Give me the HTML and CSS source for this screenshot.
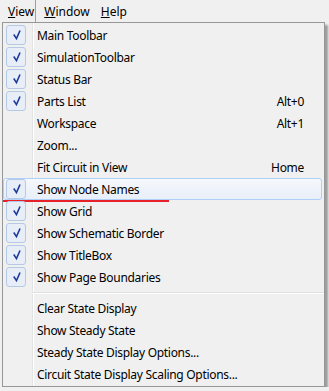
FILE: index.html
```html
<!DOCTYPE html>
<html lang="en">
<head>
    <meta charset="UTF-8">
    <meta name="viewport" content="width=device-width, initial-scale=1.0">
    <title>View Menu</title>
    <link rel="stylesheet" href="styles.css">
</head>
<body>
    <div class="menubar">
        <span class="bar-item active"><u>V</u>iew</span>
        <span class="bar-item window"><u>W</u>indow</span>
        <span class="bar-item help"><u>H</u>elp</span>
    </div>
    <div class="menu">
        <div class="item"><span class="check on"><svg viewBox="0 0 20 20"><polyline points="7.5,9.5 10.5,14 14.5,5"/></svg></span><span class="label">Main Toolbar</span></div>
        <div class="item"><span class="check on"><svg viewBox="0 0 20 20"><polyline points="7.5,9.5 10.5,14 14.5,5"/></svg></span><span class="label">SimulationToolbar</span></div>
        <div class="item"><span class="check on"><svg viewBox="0 0 20 20"><polyline points="7.5,9.5 10.5,14 14.5,5"/></svg></span><span class="label">Status Bar</span></div>
        <div class="item"><span class="check on"><svg viewBox="0 0 20 20"><polyline points="7.5,9.5 10.5,14 14.5,5"/></svg></span><span class="label">Parts List</span><span class="key">Alt+0</span></div>
        <div class="item"><span class="check"></span><span class="label">Workspace</span><span class="key">Alt+1</span></div>
        <div class="item"><span class="check"></span><span class="label">Zoom...</span></div>
        <div class="item"><span class="check"></span><span class="label">Fit Circuit in View</span><span class="key">Home</span></div>
        <div class="item hover"><span class="check on"><svg viewBox="0 0 20 20"><polyline points="7.5,9.5 10.5,14 14.5,5"/></svg></span><span class="label">Show Node Names</span><span class="mark"></span></div>
        <div class="item"><span class="check on"><svg viewBox="0 0 20 20"><polyline points="7.5,9.5 10.5,14 14.5,5"/></svg></span><span class="label">Show Grid</span></div>
        <div class="item"><span class="check on"><svg viewBox="0 0 20 20"><polyline points="7.5,9.5 10.5,14 14.5,5"/></svg></span><span class="label">Show Schematic Border</span></div>
        <div class="item"><span class="check on"><svg viewBox="0 0 20 20"><polyline points="7.5,9.5 10.5,14 14.5,5"/></svg></span><span class="label">Show TitleBox</span></div>
        <div class="item"><span class="check on"><svg viewBox="0 0 20 20"><polyline points="7.5,9.5 10.5,14 14.5,5"/></svg></span><span class="label">Show Page Boundaries</span></div>
        <div class="sep"></div>
        <div class="item"><span class="check"></span><span class="label">Clear State Display</span></div>
        <div class="item"><span class="check"></span><span class="label">Show Steady State</span></div>
        <div class="item"><span class="check"></span><span class="label">Steady State Display Options...</span></div>
        <div class="item"><span class="check"></span><span class="label">Circuit State Display Scaling Options...</span></div>
    </div>
</body>
</html>
```

FILE: styles.css
```css
body {
    margin: 0;
    background-color: #f0f0f0;
    font-family: "Noto Sans", "Open Sans", sans-serif;
    font-size: 12px;
    color: #000;
    overflow: hidden;
}
.menubar {
    display: flex;
    height: 22px;
    align-items: stretch;
}
.bar-item {
    display: flex;
    align-items: center;
    padding-top: 1px;
}
.bar-item.active {
    padding-left: 8px;
    padding-right: 1px;
    border-right: 1px solid #a0a0a0;
}
.bar-item.window {
    margin-left: 8px;
}
.bar-item.help {
    margin-left: 11px;
}
.menu {
    margin-left: 2px;
    width: 321px;
    border: 1px solid #979797;
    padding: 1px 0;
    letter-spacing: -0.3px;
    background: linear-gradient(to right, transparent 29px, #e2e3e3 29px, #e2e3e3 30px, #fff 30px, #fff 31px, transparent 31px), #f0f0f0;
    box-shadow: 3px 3px 2px rgba(0, 0, 0, 0.35);
}
.item {
    position: relative;
    display: flex;
    align-items: center;
    box-sizing: border-box;
    height: 22px;
    margin-right: 2px;
    border: 1px solid transparent;
    border-radius: 3px;
}
.item.hover {
    border-color: #aecff7;
    background: linear-gradient(to bottom, #f5f8fc, #e8eff9);
}
.check {
    box-sizing: border-box;
    width: 20px;
    height: 20px;
    margin-left: 2px;
    margin-right: 11px;
    border-radius: 3px;
}
.check.on {
    border: 1px solid #b3c9e6;
    background-color: #e8eef7;
}
.check svg {
    display: block;
    width: 18px;
    height: 18px;
    fill: none;
    stroke: #1f3c9c;
    stroke-width: 1.8;
}
.label {
    white-space: nowrap;
}
.key {
    margin-left: auto;
    padding-right: 17px;
}
.sep {
    height: 9px;
    margin-left: 29px;
    background: linear-gradient(to bottom, transparent 4px, #e0e0e0 4px, #e0e0e0 5px, #fff 5px, #fff 6px, transparent 6px);
}
.mark {
    position: absolute;
    left: -1px;
    bottom: -3px;
    width: 166px;
    height: 2px;
    background-color: #e8202a;
}
```
